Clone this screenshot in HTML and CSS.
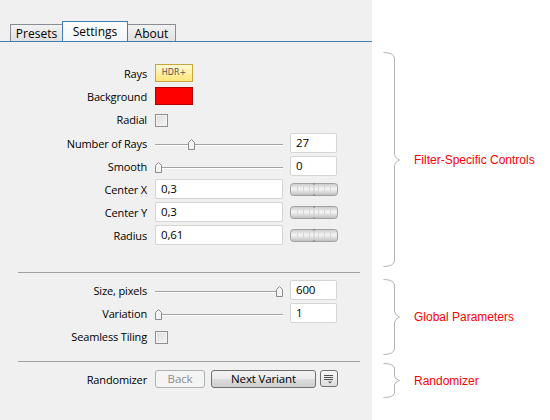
FILE: index.html
```html
<!DOCTYPE html>
<html>
<head>
<meta charset="utf-8">
<link rel="stylesheet" href="styles.css">
</head>
<body>
<div class="page">
  <div class="panel">
    <div class="tabstrip">
      <div class="tab tab-first">Presets</div>
      <div class="tab tab-active">Settings</div>
      <div class="tab tab-last">About</div>
    </div>

    <div class="rows">
      <div class="row">
        <div class="lbl">Rays</div>
        <div class="ctl"><div class="hdr-btn">HDR+</div></div>
      </div>
      <div class="row">
        <div class="lbl">Background</div>
        <div class="ctl"><div class="swatch"></div></div>
      </div>
      <div class="row row-tall">
        <div class="lbl">Radial</div>
        <div class="ctl"><div class="check check-radial"></div></div>
      </div>
      <div class="row">
        <div class="lbl">Number of Rays</div>
        <div class="ctl">
          <div class="slider"><div class="thumb" style="left:33px"><svg width="7" height="11" viewBox="0 0 7 11"><path d="M0.5 3.5 L3.5 0.5 L6.5 3.5 L6.5 10.5 L0.5 10.5 Z" fill="#f4f4f4" stroke="#8a8a8a"/></svg></div></div>
          <div class="field field-sm">27</div>
        </div>
      </div>
      <div class="row">
        <div class="lbl">Smooth</div>
        <div class="ctl">
          <div class="slider"><div class="thumb" style="left:0px"><svg width="7" height="11" viewBox="0 0 7 11"><path d="M0.5 3.5 L3.5 0.5 L6.5 3.5 L6.5 10.5 L0.5 10.5 Z" fill="#f4f4f4" stroke="#8a8a8a"/></svg></div></div>
          <div class="field field-sm">0</div>
        </div>
      </div>
      <div class="row">
        <div class="lbl">Center X</div>
        <div class="ctl">
          <div class="field field-lg">0,3</div>
          <svg class="wheel" width="48" height="13" viewBox="0 0 48 13">
            <defs><linearGradient id="wg1" x1="0" y1="0" x2="0" y2="1"><stop offset="0" stop-color="#c8c8c8"/><stop offset="0.45" stop-color="#f6f6f6"/><stop offset="1" stop-color="#bcbcbc"/></linearGradient></defs>
            <rect x="0.5" y="0.5" width="47" height="12" rx="3" fill="url(#wg1)" stroke="#a0a0a0"/>
            <g stroke="#d6d6d6"><line x1="7.5" y1="3" x2="7.5" y2="10"/><line x1="13.5" y1="3" x2="13.5" y2="10"/><line x1="19.5" y1="3" x2="19.5" y2="10"/><line x1="28.5" y1="3" x2="28.5" y2="10"/><line x1="34.5" y1="3" x2="34.5" y2="10"/><line x1="40.5" y1="3" x2="40.5" y2="10"/></g>
            <line x1="24" y1="0" x2="24" y2="2" stroke="#7a7a7a"/><line x1="24" y1="11" x2="24" y2="13" stroke="#7a7a7a"/><line x1="24" y1="3" x2="24" y2="10" stroke="#cccccc"/>
          </svg>
        </div>
      </div>
      <div class="row">
        <div class="lbl">Center Y</div>
        <div class="ctl">
          <div class="field field-lg">0,3</div>
          <svg class="wheel" width="48" height="13" viewBox="0 0 48 13">
            <defs><linearGradient id="wg2" x1="0" y1="0" x2="0" y2="1"><stop offset="0" stop-color="#c8c8c8"/><stop offset="0.45" stop-color="#f6f6f6"/><stop offset="1" stop-color="#bcbcbc"/></linearGradient></defs>
            <rect x="0.5" y="0.5" width="47" height="12" rx="3" fill="url(#wg2)" stroke="#a0a0a0"/>
            <g stroke="#d6d6d6"><line x1="7.5" y1="3" x2="7.5" y2="10"/><line x1="13.5" y1="3" x2="13.5" y2="10"/><line x1="19.5" y1="3" x2="19.5" y2="10"/><line x1="28.5" y1="3" x2="28.5" y2="10"/><line x1="34.5" y1="3" x2="34.5" y2="10"/><line x1="40.5" y1="3" x2="40.5" y2="10"/></g>
            <line x1="24" y1="0" x2="24" y2="2" stroke="#7a7a7a"/><line x1="24" y1="11" x2="24" y2="13" stroke="#7a7a7a"/><line x1="24" y1="3" x2="24" y2="10" stroke="#cccccc"/>
          </svg>
        </div>
      </div>
      <div class="row">
        <div class="lbl">Radius</div>
        <div class="ctl">
          <div class="field field-lg">0,61</div>
          <svg class="wheel" width="48" height="13" viewBox="0 0 48 13">
            <defs><linearGradient id="wg3" x1="0" y1="0" x2="0" y2="1"><stop offset="0" stop-color="#c8c8c8"/><stop offset="0.45" stop-color="#f6f6f6"/><stop offset="1" stop-color="#bcbcbc"/></linearGradient></defs>
            <rect x="0.5" y="0.5" width="47" height="12" rx="3" fill="url(#wg3)" stroke="#a0a0a0"/>
            <g stroke="#d6d6d6"><line x1="7.5" y1="3" x2="7.5" y2="10"/><line x1="13.5" y1="3" x2="13.5" y2="10"/><line x1="19.5" y1="3" x2="19.5" y2="10"/><line x1="28.5" y1="3" x2="28.5" y2="10"/><line x1="34.5" y1="3" x2="34.5" y2="10"/><line x1="40.5" y1="3" x2="40.5" y2="10"/></g>
            <line x1="24" y1="0" x2="24" y2="2" stroke="#7a7a7a"/><line x1="24" y1="11" x2="24" y2="13" stroke="#7a7a7a"/><line x1="24" y1="3" x2="24" y2="10" stroke="#cccccc"/>
          </svg>
        </div>
      </div>

      <div class="sep sep-1"></div>

      <div class="row">
        <div class="lbl">Size, pixels</div>
        <div class="ctl">
          <div class="slider"><div class="thumb" style="left:121px"><svg width="7" height="11" viewBox="0 0 7 11"><path d="M0.5 3.5 L3.5 0.5 L6.5 3.5 L6.5 10.5 L0.5 10.5 Z" fill="#f4f4f4" stroke="#8a8a8a"/></svg></div></div>
          <div class="field field-sm">600</div>
        </div>
      </div>
      <div class="row">
        <div class="lbl">Variation</div>
        <div class="ctl">
          <div class="slider"><div class="thumb" style="left:0px"><svg width="7" height="11" viewBox="0 0 7 11"><path d="M0.5 3.5 L3.5 0.5 L6.5 3.5 L6.5 10.5 L0.5 10.5 Z" fill="#f4f4f4" stroke="#8a8a8a"/></svg></div></div>
          <div class="field field-sm">1</div>
        </div>
      </div>
      <div class="row">
        <div class="lbl">Seamless Tiling</div>
        <div class="ctl"><div class="check check-seamless"></div></div>
      </div>

      <div class="sep sep-2"></div>

      <div class="row">
        <div class="lbl">Randomizer</div>
        <div class="ctl ctl-buttons">
          <div class="btn btn-disabled">Back</div>
          <div class="btn btn-next">Next Variant</div>
          <div class="btn btn-menu">
            <svg width="12" height="12" viewBox="0 0 12 12">
              <g stroke="#505050"><line x1="1" y1="2.5" x2="10" y2="2.5"/><line x1="1" y1="4.5" x2="10" y2="4.5"/><line x1="1" y1="6.5" x2="10" y2="6.5"/></g>
              <path d="M5 8.5 L9 8.5 L7 10.5 Z" fill="#505050"/>
            </svg>
          </div>
        </div>
      </div>
    </div>
  </div>

  <div class="notes">
    <div class="note note-1">
      <svg class="brace" width="18" height="215" viewBox="0 0 18 215">
        <path d="M0.5 0.5 Q10.5 0.5 11.5 6 L11.5 101 Q11.5 106 16.5 108 Q11.5 110 11.5 115 L11.5 209 Q10.5 214.5 0.5 214.5" fill="none" stroke="#b4b4b4"/>
      </svg>
      <div class="note-text">Filter-Specific Controls</div>
    </div>
    <div class="note note-2">
      <svg class="brace" width="18" height="76" viewBox="0 0 18 76">
        <path d="M0.5 0.5 Q10.5 0.5 11.5 6 L11.5 32 Q11.5 36 16.5 38 Q11.5 40 11.5 44 L11.5 70 Q10.5 75.5 0.5 75.5" fill="none" stroke="#b4b4b4"/>
      </svg>
      <div class="note-text">Global Parameters</div>
    </div>
    <div class="note note-3">
      <svg class="brace" width="18" height="35" viewBox="0 0 18 35">
        <path d="M0.5 0.5 Q10.5 0.5 11.5 5 L11.5 13 Q11.5 16 16.5 17.5 Q11.5 19 11.5 22 L11.5 30 Q10.5 34.5 0.5 34.5" fill="none" stroke="#b4b4b4"/>
      </svg>
      <div class="note-text">Randomizer</div>
    </div>
  </div>
</div>
</body>
</html>
```

FILE: styles.css
```css
html, body {
  margin: 0;
  padding: 0;
  background: #ffffff;
}

.page {
  display: flex;
  width: 550px;
  height: 420px;
  overflow: hidden;
}

.panel {
  width: 372px;
  flex: none;
  background: #f0f0f0;
  font-family: "Open Sans", "Noto Sans", sans-serif;
  font-size: 11px;
  letter-spacing: -0.15px;
  color: #000000;
}

/* Tabs */
.tabstrip {
  display: flex;
  align-items: flex-end;
  padding: 21px 0 0 10px;
  height: 20px;
  border-bottom: 1px solid #3c7fb1;
}

.tab {
  box-sizing: border-box;
  height: 17px;
  display: flex;
  align-items: center;
  justify-content: center;
  border: 1px solid #898c95;
  border-bottom: none;
  background: linear-gradient(#f2f2f2, #e1e1e1);
  font-size: 12px;
  letter-spacing: 0;
}

.tab-first {
  width: 52px;
  border-right: none;
}

.tab-active {
  width: 66px;
  height: 20px;
  border-color: #3c7fb1;
  background: linear-gradient(#fdfdfd, #f4f7f9);
  padding-bottom: 1px;
}

.tab-last {
  width: 48px;
  border-left: none;
}

/* Rows */
.rows {
  padding-top: 19px;
}

.row {
  display: grid;
  grid-template-columns: 147px 1fr;
  column-gap: 8px;
  align-items: center;
  height: 23px;
}

.row-tall {
  height: 24px;
}

.lbl {
  text-align: right;
  white-space: nowrap;
  padding-top: 1px;
}

.ctl {
  display: flex;
  align-items: center;
  gap: 7px;
}

.hdr-btn {
  box-sizing: border-box;
  width: 38px;
  height: 18px;
  border: 1px solid #c9a441;
  background: linear-gradient(#fffbd6, #ffee9a 60%, #ffe57a);
  font-family: "DejaVu Sans", sans-serif;
  font-size: 8px;
  color: #555555;
  display: flex;
  align-items: center;
  justify-content: center;
  letter-spacing: 0;
}

.swatch {
  box-sizing: border-box;
  width: 38px;
  height: 18px;
  background: #ff0000;
  border: 1px solid #b00000;
}

.check {
  box-sizing: border-box;
  width: 13px;
  height: 13px;
  border: 1px solid #8f8f8f;
  background: linear-gradient(135deg, #dcdcdc, #f6f6f6);
  box-shadow: inset 0 0 0 1px #f4f4f4;
}

.check-radial {
  margin-top: 3px;
}

.check-seamless {
  margin-top: 3px;
}

.slider {
  position: relative;
  width: 128px;
  height: 20px;
}

.slider::before {
  content: "";
  position: absolute;
  left: 0;
  right: 0;
  top: 11px;
  height: 1px;
  background: #a3a3a3;
  border-bottom: 1px solid #ffffff;
}

.thumb {
  position: absolute;
  top: 6px;
  width: 7px;
  height: 11px;
  line-height: 0;
}

.field {
  box-sizing: border-box;
  height: 20px;
  background: #ffffff;
  border: 1px solid #d4d4d4;
  border-radius: 2px;
  padding-left: 5px;
  display: flex;
  align-items: center;
  font-size: 11.5px;
  color: #000000;
}

.field-sm {
  width: 47px;
}

.field-lg {
  width: 128px;
}

.wheel {
  display: block;
  margin-top: 1px;
}

.sep {
  margin-left: 18px;
  width: 342px;
  height: 1px;
  background: #a0a0a0;
}

.sep-1 {
  margin-top: 26px;
  margin-bottom: 5px;
}

.sep-2 {
  margin-top: 14px;
  margin-bottom: 5px;
}

.ctl-buttons {
  gap: 0;
}

.btn {
  box-sizing: border-box;
  height: 18px;
  border-radius: 3px;
  display: flex;
  align-items: center;
  justify-content: center;
  font-size: 11.5px;
}

.btn-disabled {
  width: 50px;
  border: 1px solid #adb2b5;
  background: #f4f4f4;
  color: #8d8d8d;
}

.btn-next {
  width: 105px;
  margin-left: 6px;
  border: 1px solid #707070;
  background: linear-gradient(#f2f2f2 0%, #ebebeb 50%, #dddddd 51%, #cfcfcf 100%);
  color: #000000;
}

.btn-menu {
  width: 18px;
  height: 17px;
  margin-left: 4px;
  border: 1px solid #707070;
  background: linear-gradient(#f6f6f6, #dedede);
}

.btn-menu svg {
  display: block;
}

/* Notes on the right */
.notes {
  flex: 1;
  padding: 52px 0 0 11px;
  display: flex;
  flex-direction: column;
  font-family: "Liberation Sans", Arial, sans-serif;
  font-size: 12px;
  color: #ff0000;
}

.note {
  display: flex;
  align-items: center;
  gap: 13px;
}

.brace {
  display: block;
  flex: none;
}

.note-2 {
  margin-top: 12px;
}

.note-3 {
  margin-top: 8px;
}

.note-text {
  white-space: nowrap;
}
```
